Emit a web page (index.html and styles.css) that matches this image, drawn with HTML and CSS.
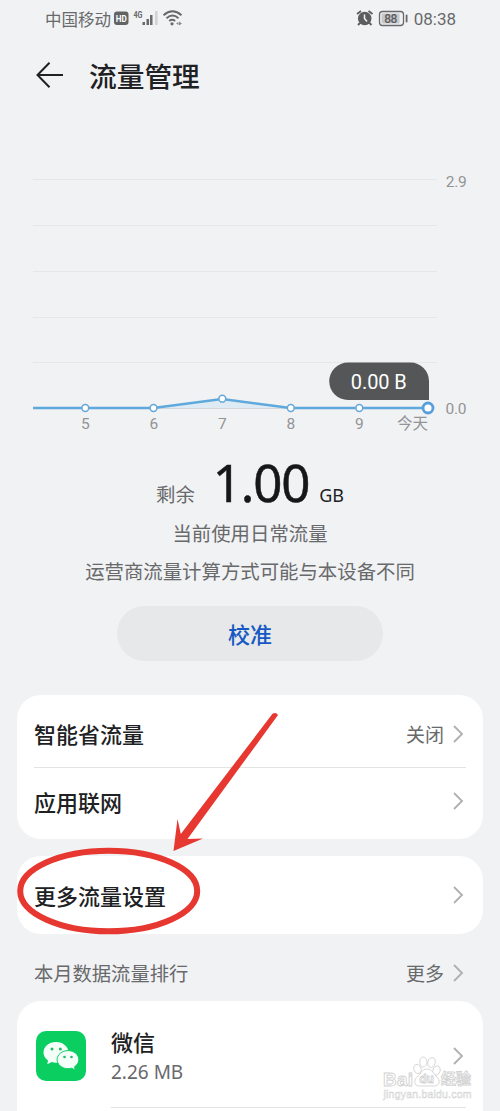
FILE: index.html
```html
<!DOCTYPE html>
<html lang="zh-CN">
<head>
<meta charset="utf-8">
<title>流量管理</title>
<link rel="stylesheet" href="styles.css">
</head>
<body>
<div class="screen">
  <header class="status">
    <span class="carrier">中国移动</span>
    <svg class="signals" width="72" height="24" viewBox="112 7 72 24">
      <rect x="114" y="11.5" width="14.5" height="13.5" rx="3" fill="#626365"/>
      <text x="121.2" y="21.5" class="hd" text-anchor="middle" textLength="11" lengthAdjust="spacingAndGlyphs">HD</text>
      <text x="133.5" y="17.500" class="g4" textLength="9" lengthAdjust="spacingAndGlyphs">4G</text>
      <g fill="#68696b"><rect x="142.5" y="22" width="2.5" height="3"/><rect x="146.5" y="19" width="2.5" height="6"/><rect x="150" y="15" width="2.5" height="10"/><rect x="155" y="11" width="2.6" height="14" fill="#d2d3d5"/></g>
      <g fill="none" stroke="#68696b" stroke-width="1.9"><path d="M163.5 15.2Q172.5 7.4 181.5 15.2"/><path d="M166.5 18.2Q172.5 13 178.5 18.2"/><path d="M169.2 21Q172 18.7 175.2 21"/></g>
      <circle cx="172" cy="23.8" r="1.6" fill="#68696b"/><path d="M176 23.500l2.500-1.500v3zM179 21.5l3 2-3 2z" fill="#8a8b8d"/>
    </svg>
    <svg class="power" width="56" height="24" viewBox="354 7 56 24">
      <g fill="#5b5c5e"><circle cx="364.7" cy="18.5" r="6.8"/><path d="M357 14l4-3M368.5 11l4 3M360 23l-2 2M369.5 23l2 2" stroke="#5b5c5e" stroke-width="1.8"/></g>
      <path d="M364.5 14.5v4l2.500 3" fill="none" stroke="#f1f2f4" stroke-width="1.5"/>
      <rect x="379.5" y="11.5" width="24" height="14" rx="3" fill="none" stroke="#68696b" stroke-width="1.3"/>
      <rect x="381.5" y="13.5" width="18" height="10" fill="#c6c7c9"/>
      <text x="390.8" y="22.800" class="charge" text-anchor="middle" textLength="13">88</text>
      <rect x="405.7" y="14.5" width="1.8" height="8" rx=".9" fill="#68696b"/>
    </svg>
    <time class="clock">08:38</time>
  </header>

  <div class="titlebar">
    <svg class="back" width="28" height="28" viewBox="0 0 28 28"><path d="M27 13H1.5M13.5 .8L1.5 13l12 12.2" fill="none" stroke="#202123" stroke-width="2"/></svg>
    <h1>流量管理</h1>
  </div>

  <svg class="chart" width="500" height="330" viewBox="0 114 500 330">
    <path d="M33 179.5H437M33 225.5H437M33 271.5H437M33 317.5H437M33 362.5H437" stroke="#e5e7e8"/>
    <path d="M33 408.5H428" stroke="#d4d7d9"/>
    <path d="M153.5 408L222 399 290.5 408z" fill="#dfebf4"/>
    <path d="M33 408H153.5L222 399 290.5 408H428" fill="none" stroke="#60a9dc" stroke-width="2.5"/>
    <g fill="#fff" stroke="#65a8d8" stroke-width="1.5"><circle cx="85.3" cy="408" r="3.4"/><circle cx="153.5" cy="408" r="3.4"/><circle cx="222.3" cy="398.7" r="3.4"/><circle cx="290.8" cy="408" r="3.4"/><circle cx="359.3" cy="408" r="3.4"/></g>
    <path d="M348 362.5H410.5A18.5 18.5 0 0 1 429 381V400H348A18.75 18.75 0 0 1 348 362.5z" fill="#555657"/>
    <circle cx="428" cy="408" r="5" fill="#fff" stroke="#589fdc" stroke-width="2.8"/>
    <text x="378.8" y="389" class="tip" text-anchor="middle" textLength="56">0.00 B</text>
    <g class="axis"><text x="85.3" y="428.5">5</text><text x="153.8" y="428.5">6</text><text x="222.3" y="428.5">7</text><text x="290.8" y="428.5">8</text><text x="359.3" y="428.5">9</text><text x="412.5" y="428.5" class="today">今天</text><text x="456.2" y="186.5" textLength="21">2.9</text><text x="456" y="413.5" textLength="21">0.0</text></g>
  </svg>

  <section class="summary">
    <div class="amount"><span class="left">剩余</span><strong>1.00</strong><span class="unit">GB</span></div>
    <p>当前使用日常流量</p>
    <p>运营商流量计算方式可能与本设备不同</p>
    <button class="calibrate">校准</button>
  </section>

  <main class="cards">
    <section class="card options">
      <div class="row"><span class="label">智能省流量</span><span class="value">关闭</span><svg class="chev" viewBox="0 0 12 18"><path d="M2 1l8 8-8 8"/></svg></div>
      <div class="row second"><span class="label">应用联网</span><svg class="chev" viewBox="0 0 12 18"><path d="M2 1l8 8-8 8"/></svg></div>
    </section>
    <section class="card more">
      <div class="row"><span class="label">更多流量设置</span><svg class="chev" viewBox="0 0 12 18"><path d="M2 1l8 8-8 8"/></svg></div>
    </section>
    <div class="row ranking"><span class="heading">本月数据流量排行</span><span class="value">更多</span><svg class="chev" viewBox="0 0 12 18"><path d="M2 1l8 8-8 8"/></svg></div>
    <section class="card apps">
      <div class="app">
        <svg class="wechat" width="50" height="50" viewBox="0 0 50 50">
          <rect width="50" height="50" rx="10" fill="#0bce61"/>
          <path d="M20 11C13 11 7.5 15.5 7.5 21.5c0 3.3 1.800 6 4.500 8L11.3 33.2l4.500-2.100c1.300.4 2.700.6 4.200.6 7 0 12.500-4.600 12.500-10.200S27 11 20 11z" fill="#f5fff9"/>
          <path d="M32 19.6c-6 0-10.900 4-10.900 9 0 5.100 4.900 9.100 10.900 9.100 1.300 0 2.500-.2 3.600-.5l3.700 1.900-.8-3.300c2.600-1.700 4.300-4.200 4.300-7.200 0-5-4.800-9-10.800-9z" fill="#f5fff9" stroke="#0bce61"/>
          <g fill="#24b967"><circle cx="16" cy="18" r="1.5"/><circle cx="24.3" cy="18" r="1.5"/><circle cx="28.5" cy="26" r="1.3"/><circle cx="35.5" cy="26" r="1.3"/></g>
        </svg>
        <div class="details"><span class="name">微信</span><span class="usage">2.26 MB</span></div>
        <svg class="chev" viewBox="0 0 12 18"><path d="M2 1l8 8-8 8"/></svg>
      </div>
    </section>
  </main>

  <svg class="markup" width="500" height="1111" viewBox="0 0 500 1111">
    <ellipse cx="108.7" cy="891" rx="88.5" ry="40.3" fill="none" stroke="#e63730" stroke-width="6"/>
    <path d="M272.5 713.8Q276 711.5 278 715L187.500 839 203 838.5 173.5 851 177.5 819 180.800 834z" fill="#e63730"/>
  </svg>
  <svg class="watermark" width="100" height="50" viewBox="380 1055 100 50">
    <g fill="#fff" stroke="#d2d2d2" stroke-width=".9">
      <text x="383" y="1085.5" class="brand" textLength="30">Bai</text>
      <ellipse cx="417.5" cy="1069" rx="3.6" ry="4.7" transform="rotate(-20 417.5 1069)"/><ellipse cx="423.3" cy="1062" rx="3.6" ry="5"/><ellipse cx="431.500" cy="1062.5" rx="3.7" ry="5" transform="rotate(15 431.5 1062.5)"/><ellipse cx="436.5" cy="1070.500" rx="3.6" ry="4.7" transform="rotate(20 436.5 1070.5)"/>
      <path d="M427 1069c-5 0-6 5-9 7-5 4-4 10 1 10h15c6 0 7-6 2-10-3-3-4-7-9-7z"/>
      <text x="426.5" y="1083" class="du" text-anchor="middle">du</text>
      <text x="441" y="1084" class="jy" textLength="30">经验</text>
      <text x="383.5" y="1097.500" class="url" textLength="88">jingyan.baidu.com</text>
    </g>
  </svg>
</div>
</body>
</html>
```
FILE: styles.css
```css
* { box-sizing: border-box; }
body { margin: 0; background: #f1f2f4; font-family: "Noto Sans CJK SC", sans-serif; color: #202123; }
.screen { position: relative; width: 500px; height: 1111px; overflow: hidden; display: flex; flex-direction: column; }
.status { height: 38px; flex: none; display: flex; align-items: center; padding: 0 44px 0 45px; color: #68696b; }
.carrier { font-size: 16.5px; width: 67px; line-height: 24px; }
.signals { flex: none; }
.power { margin-left: auto; flex: none; }
.clock { font: 17px/24px Roboto, sans-serif; margin-left: 4px; }
.hd { font: bold 8.5px Roboto, sans-serif; fill: #fff; }
.g4 { font: bold 9.5px Roboto, sans-serif; fill: #68696b; }
.charge { font: 500 12px Roboto, sans-serif; fill: #5b5c5e; }
.titlebar { height: 76px; flex: none; display: flex; align-items: center; padding-left: 36px; gap: 25px; }
.titlebar h1 { margin: 0; font-size: 27.7px; font-weight: 500; line-height: 40px; padding-bottom: 2px; }
.chart { display: block; flex: none; }
.tip { font: 20px Roboto, sans-serif; fill: #fff; }
.axis { font: 15.5px Roboto, sans-serif; fill: #939496; text-anchor: middle; }
.axis .today { font-family: "Noto Sans CJK SC", sans-serif; }
.summary { height: 251px; flex: none; display: flex; flex-direction: column; align-items: center; }
.amount { height: 70px; padding-top: 2px; display: flex; align-items: baseline; line-height: 72px; }
.amount strong { font: 400 51px/72px "Noto Sans", sans-serif; letter-spacing: -1.2px; margin: 0 10px 0 18px; color: #161719; -webkit-text-stroke: .5px #161719; }
.left, .summary p { color: #68696b; font-size: 19.4px; }
.unit { font: 18px/72px "Noto Sans", sans-serif; }
.summary p { margin: 0; height: 37.5px; line-height: 37.5px; }
.calibrate { margin-top: 17px; width: 266px; height: 55px; border: 0; border-radius: 28px; background: #e6e8e9; color: #1558c4; font: 500 22px/55px "Noto Sans CJK SC", sans-serif; padding: 0; }
.cards { padding: 0 17px; display: flex; flex-direction: column; }
.card { background: #fff; border-radius: 24px; flex: none; }
.options { height: 144px; padding: 0 17px; }
.more { height: 78px; margin-top: 17px; padding: 0 17px; }
.row { height: 78px; display: flex; align-items: center; }
.options .row { height: 72px; padding-top: 5px; }
.options .row.second { height: 71px; border-top: 1px solid #e3e3e3; padding: 0 0 4px; }
.label { font-size: 22px; font-weight: 500; padding-bottom: 1px; }
.value { margin-left: auto; font-size: 19px; color: #68696b; }
.chev { width: 12px; height: 18px; flex: none; margin: 0 2px 0 auto; fill: none; stroke: #b0b1b3; stroke-width: 1.9; }
.value + .chev { margin-left: 8px; }
.ranking { height: 67px; padding: 10px 17px 0; }
.heading { font-size: 19.3px; color: #68696b; }
.apps { height: 140px; border-radius: 24px 24px 0 0; padding: 0 17px 0 19px; }
.app { height: 107px; display: flex; align-items: center; position: relative; padding-top: 3px; }
.app::after { content: ""; position: absolute; left: 75px; right: 0; bottom: 0; height: 1px; background: #e3e3e3; }
.details { display: flex; flex-direction: column; margin-left: 25px; line-height: 31px; padding-top: 2px; }
.name { font-size: 22px; font-weight: 500; }
.usage { font: 19px/31px "Noto Sans", sans-serif; color: #68696b; }
.markup { position: absolute; left: 0; top: 0; }
.watermark { position: absolute; left: 380px; top: 1055px; }
.brand { font: bold 19px "Liberation Sans", sans-serif; }
.du { font: bold 12px "Liberation Sans", sans-serif; }
.jy { font: bold 15px "Noto Sans CJK SC", sans-serif; }
.url { font: 10.5px "Liberation Sans", sans-serif; stroke-width: .5; }
```
